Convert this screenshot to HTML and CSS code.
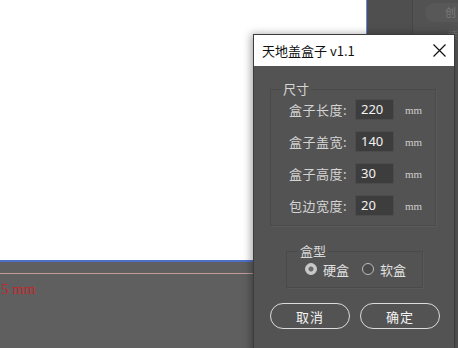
FILE: index.html
```html
<!DOCTYPE html>
<html lang="zh">
<head>
<meta charset="utf-8"/>
<title>天地盖盒子 v1.1</title>
<link rel="stylesheet" href="styles.css">
</head>
<body>
<div class="workspace">
  <div class="doc">
    <div class="page"></div>
    <div class="pasteboard">
      <div class="guide"></div>
      <div class="dim">5 mm</div>
    </div>
  </div>
  <div class="panel">
    <div class="panel-gap"></div>
    <div class="panel-col">
      <div class="ghost-btn">创</div>
      <div class="ghost-text">读</div>
    </div>
  </div>

  <div class="dialog">
    <div class="titlebar">
      <span class="title">天地盖盒子 v1.1</span>
      <svg class="close" width="13" height="13" viewBox="0 0 13 13">
        <path d="M0.5 0.5 L12.5 12.5 M12.5 0.5 L0.5 12.5" stroke="#111" stroke-width="1.2" fill="none"/>
      </svg>
    </div>
    <div class="dialog-body">
      <fieldset class="group size-group">
        <legend>尺寸</legend>
        <div class="row">
          <label>盒子长度:</label>
          <input class="num" type="text" value="220"/>
          <span class="unit">mm</span>
        </div>
        <div class="row">
          <label>盒子盖宽:</label>
          <input class="num" type="text" value="140"/>
          <span class="unit">mm</span>
        </div>
        <div class="row">
          <label>盒子高度:</label>
          <input class="num" type="text" value="30"/>
          <span class="unit">mm</span>
        </div>
        <div class="row">
          <label>包边宽度:</label>
          <input class="num" type="text" value="20"/>
          <span class="unit">mm</span>
        </div>
      </fieldset>

      <fieldset class="group type-group">
        <legend>盒型</legend>
        <div class="radios">
          <span class="radio"><span class="dot checked"></span>硬盒</span>
          <span class="radio"><span class="dot"></span>软盒</span>
        </div>
      </fieldset>

      <div class="actions">
        <button class="btn">取消</button>
        <button class="btn">确定</button>
      </div>
    </div>
  </div>
</div>
</body>
</html>
```

FILE: styles.css
```css
body {
    margin: 0;
    width: 458px;
    height: 348px;
    overflow: hidden;
    font-family: "Noto Sans CJK SC", "Noto Sans", sans-serif;
    background: #5e5e5e;
}
.workspace {
    position: relative;
    display: flex;
    width: 458px;
    height: 348px;
}
.doc {
    width: 367px;
    display: flex;
    flex-direction: column;
}
.page {
    height: 260px;
    background: #ffffff;
    border-right: 1px solid #6d8ad8;
    border-bottom: 2px solid #4d70c6;
}
.pasteboard {
    flex: 1;
    background: #5f5f5f;
    padding-top: 11px;
}
.guide {
    height: 1px;
    background: #c39c98;
}
.dim {
    margin: 7px 0 0 1px;
    font-family: "Liberation Serif", serif;
    font-size: 15px;
    line-height: 16px;
    color: #c4262c;
}
.panel {
    flex: 1;
    display: flex;
    background: #4f4f4f;
}
.panel-gap {
    width: 45px;
    border-right: 1px solid #464646;
}
.panel-col {
    flex: 1;
    background: #525252;
    padding: 3px 0 0 12px;
}
.ghost-btn {
    height: 19px;
    border-radius: 10px 0 0 10px;
    background: #585858;
    color: #7a7a7a;
    font-size: 11px;
    line-height: 19px;
    text-align: right;
    padding-right: 2px;
}
.ghost-text {
    margin-top: 5px;
    color: #6a6a6a;
    font-size: 10px;
    text-align: right;
}

.dialog {
    position: absolute;
    left: 253px;
    top: 34px;
    width: 200px;
    height: 320px;
    background: #535353;
    border: 1px solid #3c3c3c;
    box-shadow: -2px 0 8px rgba(0, 0, 0, 0.35);
}
.titlebar {
    height: 31px;
    background: #ffffff;
    display: flex;
    align-items: center;
    justify-content: space-between;
    padding: 0 8px 0 8px;
}
.title {
    font-size: 13px;
    color: #111;
}
.dialog-body {
    padding: 15px 0 0 16px;
}
.group {
    margin: 0;
    border: 1px solid #4a4a4a;
    box-shadow: 1px 1px 0 #5a5a5a;
}
.group legend {
    padding: 0 2px;
    margin-left: -8px;
    font-size: 13px;
    line-height: 16px;
    color: #d6d6d6;
}
.size-group {
    box-sizing: border-box;
    width: 166px;
    padding: 2px 0 9px 18px;
}
.row {
    display: grid;
    grid-template-columns: 66px 39px auto;
    align-items: center;
    height: 21px;
    margin-bottom: 11px;
}
.row:last-child {
    margin-bottom: 0;
}
.row label {
    font-size: 13px;
    color: #d4d4d4;
    letter-spacing: 0.5px;
}
.num {
    width: 39px;
    height: 21px;
    box-sizing: border-box;
    background: #3d3d3d;
    border: 1px solid #4c4c4c;
    color: #f2f2f2;
    font-family: "Noto Sans", sans-serif;
    font-size: 13px;
    padding: 0 0 2px 5px;
    outline: none;
}
.unit {
    margin-left: 11px;
    font-family: "Liberation Serif", serif;
    font-size: 11px;
    color: #d0d0d0;
}
.type-group {
    box-sizing: border-box;
    width: 137px;
    margin: 17px 0 0 16px;
    padding: 1px 0 9px 18px;
}
.type-group legend {
    margin-left: -7px;
}
.radios {
    display: flex;
    gap: 13px;
    height: 18px;
    align-items: center;
}
.radio {
    display: flex;
    align-items: center;
    gap: 6px;
    font-size: 13px;
    color: #e0e0e0;
}
.dot {
    width: 10px;
    height: 10px;
    border-radius: 50%;
    border: 1px solid #bdbdbd;
    background: #4a4a4a;
}
.dot.checked {
    background: radial-gradient(circle, #6a6a6a 0 2px, #c9c9c9 3px);
    border-color: #c9c9c9;
}
.actions {
    display: flex;
    gap: 10px;
    margin-top: 15px;
}
.btn {
    width: 80px;
    height: 26px;
    background: transparent;
    border: 1.5px solid #dcdcdc;
    border-radius: 13px;
    color: #f4f4f4;
    font-family: "Noto Sans CJK SC", sans-serif;
    font-size: 13px;
    letter-spacing: 1px;
    cursor: pointer;
}
```
